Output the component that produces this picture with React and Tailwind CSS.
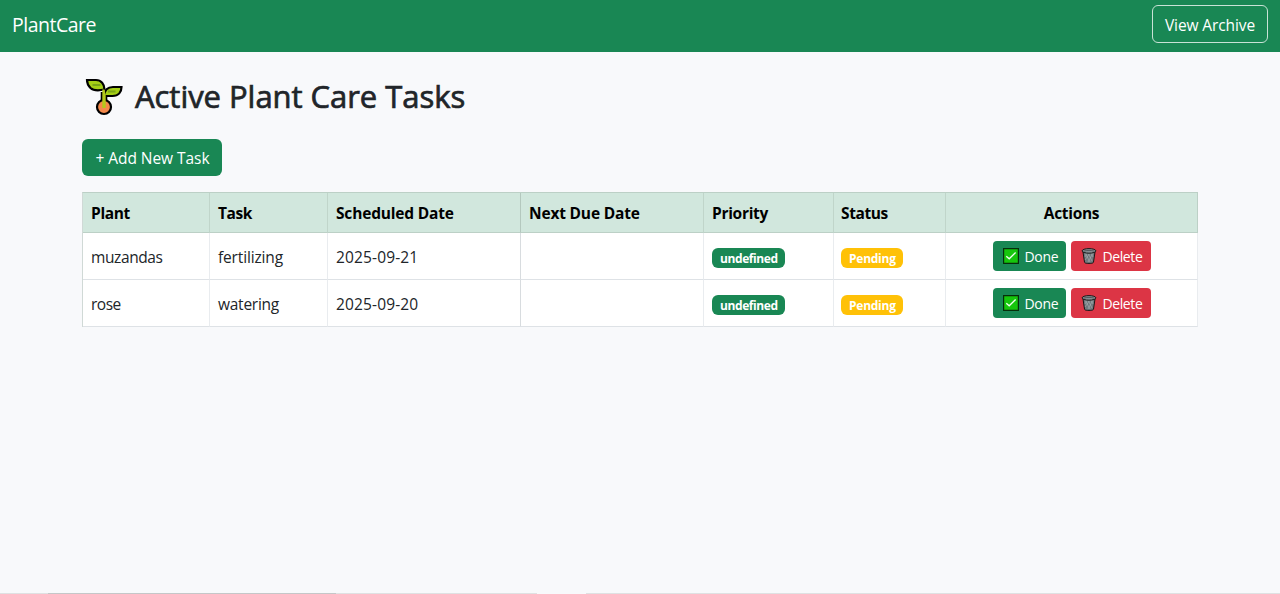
const tasks = [
  { plant: "muzandas", task: "fertilizing", date: "2025-09-21", plantTracking: "tracking-[-0.4px]", taskTracking: "tracking-[-0.15px]" },
  { plant: "rose", task: "watering", date: "2025-09-20", plantTracking: "tracking-[-0.5px]", taskTracking: "tracking-[-0.25px]" },
];

const columns = [
  { label: "Plant", style: "tracking-[-0.35px] border-r-[#c0d5ca]" },
  { label: "Task", style: "tracking-[-0.4px] border-r-[#c0d5ca]" },
  { label: "Scheduled Date", style: "tracking-[-0.18px] border-r-[#b4c8be]" },
  { label: "Next Due Date", style: "tracking-[-0.18px] border-r-[#c0d5ca]" },
  { label: "Priority", style: "tracking-[-0.3px] border-r-[#c0d5ca]" },
  { label: "Status", style: "tracking-[-0.4px] border-r-[#c0d5ca] pl-[7px]" },
];

function Seedling() {
  return (
    <svg className="h-[38px] w-[38px] shrink-0" viewBox="0 0 38 38" fill="none">
      <path d="M19 25V14" stroke="#000" strokeWidth="6.6" />
      <circle cx="19" cy="29" r="7" fill="#f4894a" stroke="#000" strokeWidth="2.2" />
      <path d="M2 2h9c5 0 8.500 4 8.500 9.500-7 1.500-11 1.300-14-1.500C3 7.500 2 5 2 2Z" fill="#a5cf16" stroke="#000" strokeWidth="2.2" />
      <path d="M36.500 9H28c-5 0-8.500 2.500-9 9h8.500c6 0 9-4 9-9Z" fill="#a5cf16" stroke="#000" strokeWidth="2.2" />
      <path d="M17.300 11.500h2.200l1.200 5v13.500h-3.400Z" fill="#b3c81b" />
      <path d="M7.500 7h8M23 13.500h7.500" stroke="#7aa516" strokeWidth="1.800" />
    </svg>
  );
}

function CheckBox() {
  return (
    <svg className="h-4 w-4 shrink-0" viewBox="0 0 16 16" fill="none">
      <path d="M.6.6h14.800v14.800H.6Z" fill="#16c60c" stroke="#062e0b" strokeWidth="1.2" />
      <path d="m3.300 8.200 2.900 2.600 6.400-6.300" stroke="#f2fff1" strokeWidth="1.3" />
    </svg>
  );
}

function TrashCan() {
  return (
    <svg className="h-4 w-4 shrink-0" viewBox="0 0 16 16" fill="none">
      <path d="m2 4 1.500 10c.2 1 1 1.400 4.500 1.400s4.300-.4 4.500-1.400L14 4Z" fill="#70787d" stroke="#171717" strokeWidth="1" />
      <path d="m4 5 5 9M7 5l4 8M10 5l2 4M12 5l-5 9M9 5l-5 7M6 5l-2 4" stroke="#a9b0b4" strokeWidth=".6" />
      <ellipse cx="8" cy="2.900" rx="6.900" ry="2.300" fill="#858d92" stroke="#171717" strokeWidth="1" />
      <path d="M3 3.100c2-.9 8-.9 10 0" stroke="#525a5e" strokeWidth="1" />
    </svg>
  );
}

const head = "border-r border-b border-b-[#bcd0c6] px-2 pt-[3px] text-left font-bold text-black ";
const cell = "border-r border-b border-r-[#e9ecef] border-b-[#dee2e6] px-2 pt-[3px]";
const badge = "flex h-5 w-fit items-center rounded-md pr-[7.500px] pl-2 pt-px text-[12px] leading-none font-bold text-white";
const action = "flex h-[30px] items-center rounded pl-[10px] text-[14px] text-white";

export default function App() {
  return (
    <div className="flex h-[594px] w-[1280px] flex-col overflow-hidden bg-[#f8f9fb] font-['Open_Sans','Noto_Sans',sans-serif] text-[15.5px] text-[#212529]">
      <nav className="flex h-[52px] shrink-0 items-center justify-between bg-[#198754] px-3 pb-[3px] text-white">
        <a className="pt-px text-[19.5px] tracking-[-0.5px]">PlantCare</a>
        <button className="h-[38px] w-[116px] -translate-y-px rounded-md border border-[#c9e2d6] pt-1 tracking-[-0.1px] whitespace-nowrap">View Archive</button>
      </nav>
      <main className="flex grow flex-col items-start pl-[82px]">
        <h1 className="mt-[26px] flex h-[38px] items-center gap-[12px] pl-[3px] text-[31px] tracking-[-0.04px] whitespace-nowrap [-webkit-text-stroke:0.7px_#212529]">
          <Seedling />
          <span className="-mt-px">Active Plant Care Tasks</span>
        </h1>
        <button className="mt-[23px] h-[37px] w-[140px] rounded-md bg-[#198754] pt-[3px] pl-px tracking-[-0.05px] whitespace-nowrap text-white">+ Add New Task</button>
        <table className="mt-4 w-[1116px] table-fixed border-separate border-spacing-0 border-t border-l border-t-[#bcd0c6] border-l-[#d0d9d6] bg-white">
          <colgroup>
            <col className="w-[127px]" />
            <col className="w-[118px]" />
            <col className="w-[193px]" />
            <col className="w-[183px]" />
            <col className="w-[130px]" />
            <col className="w-[112px]" />
            <col className="w-[252px]" />
          </colgroup>
          <thead>
            <tr className="h-10 bg-[#d1e7dd] whitespace-nowrap">
              {columns.map((c) => (
                <th key={c.label} className={head + c.style}>{c.label}</th>
              ))}
              <th className="border-r border-b border-[#bcd0c6] pt-[3px] text-center font-bold tracking-[-0.3px] text-black">Actions</th>
            </tr>
          </thead>
          <tbody>
            {tasks.map((t) => (
              <tr key={t.plant} className="h-[47px]">
                <td className={cell}><span className={t.plantTracking}>{t.plant}</span></td>
                <td className={cell}><span className={t.taskTracking}>{t.task}</span></td>
                <td className="border-r border-b border-r-[#d8dcdf] border-b-[#dee2e6] px-2 pt-[3px] tracking-[0.15px]">{t.date}</td>
                <td className={cell} />
                <td className={cell}><span className={badge + " mt-px bg-[#198754] tracking-[-0.4px]"}>undefined</span></td>
                <td className={cell}><span className={badge + " mt-px -ml-px bg-[#ffc107] tracking-[-0.25px]"}>Pending</span></td>
                <td className="border-r border-b border-r-[#e9ecef] border-b-[#dee2e6]">
                  <div className="flex justify-center gap-[5px]">
                    <button className={action + " w-[73px] gap-[6px] bg-[#198754] tracking-[-0.3px]"}><CheckBox />Done</button>
                    <button className={action + " w-[80px] gap-[6px] bg-[#dc3545] tracking-[-0.4px]"}><TrashCan />Delete</button>
                  </div>
                </td>
              </tr>
            ))}
          </tbody>
        </table>
      </main>
      <footer className="flex h-px shrink-0">
        <div className="w-12 bg-[#dfe1e2]" />
        <div className="w-72 bg-[#c5c7c8]" />
        <div className="w-[201px] bg-[#dfe1e2]" />
        <div className="w-[49px]" />
        <div className="grow bg-[#dfe1e2]" />
      </footer>
    </div>
  );
}
